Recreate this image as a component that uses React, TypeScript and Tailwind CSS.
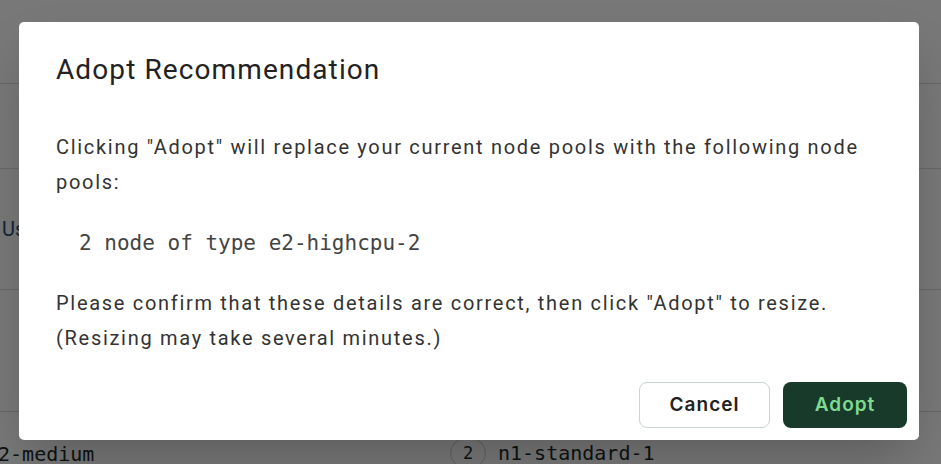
import React from "react";

export default function App() {
  const mono = { fontFamily: '"DejaVu Sans Mono", "Liberation Mono", monospace' };
  return (
    <div className="relative w-[941px] h-[464px] overflow-hidden bg-white" style={{ fontFamily: 'Roboto, "Noto Sans", sans-serif' }}>
      {/* Underlying page */}
      <div className="flex flex-col">
        <div className="h-[84px] border-b border-[#dcdcdc]" />
        <div className="h-[85px] border-b border-[#dcdcdc]" />
        <div className="h-[121px] border-b border-[#dcdcdc] flex items-center">
          <span className="text-[20px] text-[#1f4f7a] ml-[2px]">Usage</span>
        </div>
        <div className="h-[122px] border-b border-[#dcdcdc]" />
        <div className="h-[52px] flex items-end text-[20px] text-[#1c2b2b]" style={mono}>
          <span className="w-[464px] -ml-[14px] leading-none">e2-medium</span>
          <span className="flex items-center gap-[12px] leading-none -mb-[4px]">
            <span className="w-[36px] h-[30px] rounded-full border border-[#c9c9c9] flex items-center justify-center text-[17px]">2</span>
            <span>n1-standard-1</span>
          </span>
        </div>
      </div>

      {/* Overlay */}
      <div className="absolute inset-0 bg-black/[0.53] pl-[19px] pt-[22px]">
        <div className="w-[900px] h-[418px] bg-white rounded-[5px] shadow-2xl flex flex-col">
          <h2 className="pl-[37px] pt-[32px] text-[28px] leading-[32px] font-normal tracking-[1.1px] text-[#222]">
            Adopt Recommendation
          </h2>
          <div className="pl-[37px] pr-[40px] mt-[44px] text-[20px] leading-[35px] tracking-[1.7px] text-[#333]">
            <p>Clicking "Adopt" will replace your current node pools with the following node pools:</p>
            <p className="mt-[26px] ml-[23px] text-[21px] tracking-normal text-[#444]" style={mono}>2 node of type e2-highcpu-2</p>
            <p className="mt-[25px]">
              Please confirm that these details are correct, then click "Adopt" to resize. (Resizing may take several minutes.)
            </p>
          </div>
          <div className="mt-auto flex justify-end gap-[13px] pr-[12px] pb-[12px]" style={{ fontFamily: 'Inter, "Noto Sans", sans-serif' }}>
            <button className="w-[131px] h-[46px] rounded-[8px] border border-[#c9d3cf] bg-white text-[19px] font-semibold tracking-[1px] text-[#222]">
              Cancel
            </button>
            <button className="w-[124px] h-[46px] rounded-[8px] bg-[#173a2a] text-[19px] font-semibold tracking-[1px] text-[#7fd98f]">
              Adopt
            </button>
          </div>
        </div>
      </div>
    </div>
  );
}
